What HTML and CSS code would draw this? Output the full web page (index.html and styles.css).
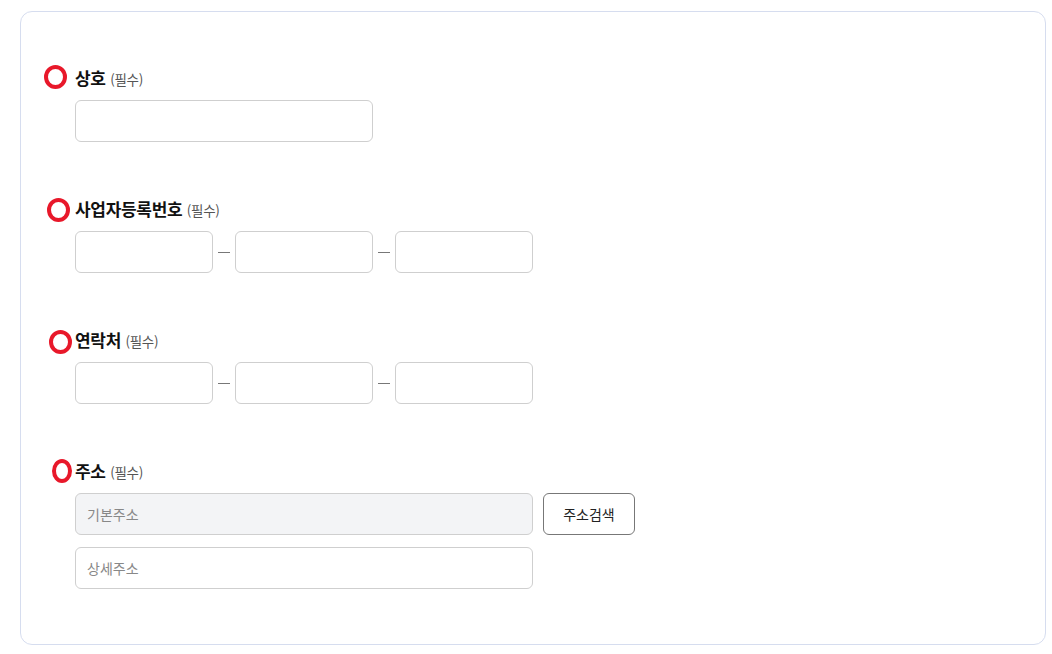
FILE: index.html
```html
<!DOCTYPE html>
<html lang="ko">
<head>
    <meta charset="UTF-8">
    <meta name="viewport" content="width=device-width, initial-scale=1.0">
    <title>사업자 정보 입력</title>
    <link rel="stylesheet" href="styles.css">
</head>
<body>
<div class="card">
    <div class="field">
        <span class="mark mark1"></span>
        <div class="label">상호 <span class="req">(필수)</span></div>
        <input type="text" class="inp inp-name">
    </div>

    <div class="field">
        <span class="mark mark2"></span>
        <div class="label">사업자등록번호 <span class="req">(필수)</span></div>
        <div class="row">
            <input type="text" class="inp inp-part">
            <span class="dash"></span>
            <input type="text" class="inp inp-part">
            <span class="dash"></span>
            <input type="text" class="inp inp-part">
        </div>
    </div>

    <div class="field">
        <span class="mark mark3"></span>
        <div class="label">연락처 <span class="req">(필수)</span></div>
        <div class="row">
            <input type="text" class="inp inp-part">
            <span class="dash"></span>
            <input type="text" class="inp inp-part">
            <span class="dash"></span>
            <input type="text" class="inp inp-part">
        </div>
    </div>

    <div class="field">
        <span class="mark mark4"></span>
        <div class="label">주소 <span class="req">(필수)</span></div>
        <div class="row">
            <input type="text" class="inp inp-addr readonly" placeholder="기본주소" readonly>
            <button class="btn-search">주소검색</button>
        </div>
        <div class="row">
            <input type="text" class="inp inp-addr" placeholder="상세주소">
        </div>
    </div>
</div>
</body>
</html>
```

FILE: styles.css
```css
body{
    margin: 0;
    background: #fff;
    font-family: "Noto Sans CJK KR", "Noto Sans", sans-serif;
    color: #111;
}
.card{
    margin: 11px 6px 8px 20px;
    height: 634px;
    box-sizing: border-box;
    border: 1px solid #d6ddef;
    border-radius: 12px;
    padding: 55px 54px 0 54px;
    display: flex;
    flex-direction: column;
    gap: 56px;
}
.field{
    position: relative;
    display: flex;
    flex-direction: column;
    gap: 11px;
}
.label{
    font-size: 17px;
    font-weight: bold;
    line-height: 22px;
    height: 22px;
    letter-spacing: -0.3px;
}
.req{
    font-size: 13.5px;
    font-weight: normal;
    color: #555;
    letter-spacing: -0.3px;
}
.row{
    display: flex;
    align-items: center;
    gap: 10px;
}
.field .row + .row{
    margin-top: 1px;
}
.inp{
    height: 42px;
    box-sizing: border-box;
    border: 1px solid #cfcfcf;
    border-radius: 6px;
    padding: 0 11px;
    font-family: inherit;
    font-size: 14px;
    color: #222;
    background: #fff;
    outline: none;
}
.inp::placeholder{
    color: #888;
}
.inp-name{
    width: 298px;
}
.inp-part{
    width: 138px;
}
.row .dash{
    width: 12px;
    height: 1px;
    background: #777;
    margin: 0 -5px;
}
.inp-addr{
    width: 458px;
}
.readonly{
    background: #f3f4f6;
}
.btn-search{
    width: 92px;
    height: 42px;
    border: 1px solid #777;
    border-radius: 6px;
    background: #fff;
    font-family: inherit;
    font-size: 14px;
    color: #222;
    cursor: pointer;
}
.mark{
    position: absolute;
    width: 15px;
    height: 16px;
    border: 4px solid #e8182a;
    border-radius: 50%;
}
.mark1{ left: -31px; top: -2px; }
.mark2{ left: -28px; top: 0; }
.mark3{ left: -26px; top: 1px; }
.mark4{ left: -23px; top: -1px; width: 12px; }
```
